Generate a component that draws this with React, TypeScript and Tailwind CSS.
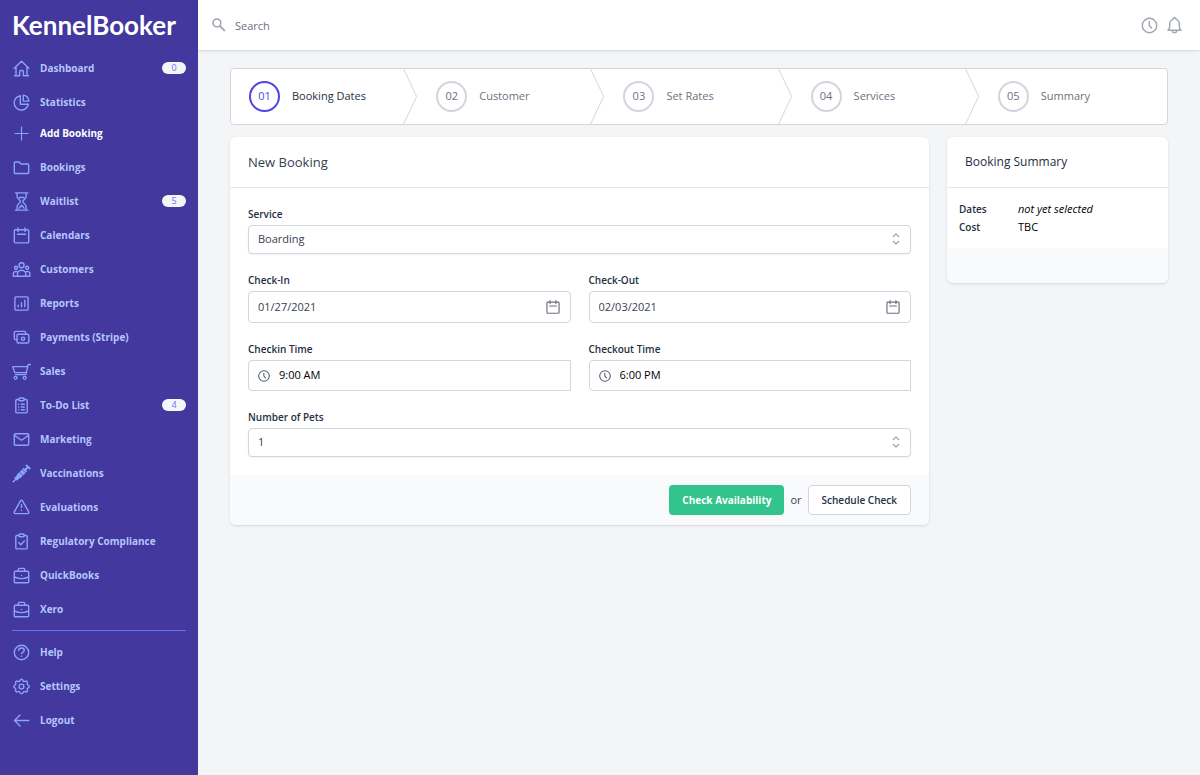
import type { ReactNode } from 'react';
import clsx from 'clsx';

const Icon: React.FC<{ children: ReactNode; className?: string }> = ({
  children,
  className = 'w-[19px] h-[19px]',
}) => (
  <svg
    viewBox="0 0 19 19"
    fill="none"
    stroke="currentColor"
    strokeWidth="1.4"
    strokeLinecap="round"
    strokeLinejoin="round"
    className={clsx('flex-shrink-0', className)}
    aria-hidden="true"
  >
    {children}
  </svg>
);

const calendarPaths = (
  <>
    <rect x="2.3" y="3.7" width="14.4" height="13.2" rx="1" />
    <path d="M6 2v3.4M13 2v3.4M5.5 8.3h8" />
  </>
);

const clockPaths = (
  <>
    <circle cx="9.5" cy="9.5" r="7.2" />
    <path d="M9.3 5.8v3.7l2.2 2.5" />
  </>
);

const briefcasePaths = (
  <>
    <rect x="2.3" y="5.3" width="14.4" height="11.5" rx="1" />
    <path d="M6.3 5.3V3.6a1.2 1.2 0 0 1 1.2-1.2h4a1.2 1.2 0 0 1 1.2 1.2v1.7M2.5 11c4.4 2 9.6 2 14 0" />
    <path d="M9.5 9.5v.1" />
  </>
);

type NavItem = { name: string; icon: ReactNode; count?: number; current?: boolean };

const navigation: NavItem[] = [
  {
    name: 'Dashboard',
    count: 0,
    icon: (
      <path d="M2.2 9.3 9.5 2.2l7.3 7.1M4 8v8.8h3.6v-4a1.3 1.3 0 0 1 1.3-1.3h1.2a1.3 1.3 0 0 1 1.3 1.3v4H15V8M2.5 16.8h5M11.5 16.8h5" />
    ),
  },
  {
    name: 'Statistics',
    icon: (
      <>
        <path d="M8.3 2.7A7.2 7.2 0 1 0 16.4 11.3H8.3z" />
        <path d="M11.3 2.1a6.500 6.500 0 0 1 5.500 6h-5.500z" />
      </>
    ),
  },
  {
    name: 'Add Booking',
    current: true,
    icon: <path strokeWidth="1.2" d="M9.5 3v13M3 9.500h13" />,
  },
  {
    name: 'Bookings',
    icon: (
      <path d="M2.3 5a1 1 0 0 1 1-1h3.800l2 2h6.600a1 1 0 0 1 1 1v7.500a1 1 0 0 1-1 1H3.300a1 1 0 0 1-1-1z" />
    ),
  },
  {
    name: 'Waitlist',
    count: 5,
    icon: (
      <g strokeWidth="1.3">
        <path d="M3.3.8h12.600M3.300 18.200h12.600M5 .8v3.400c0 2.800 3.400 3.600 3.400 5.300S5 12 5 14.800v3.400M14.200.8v3.400c0 2.800-3.400 3.600-3.400 5.300s3.400 2.500 3.400 5.300v3.400" />
        <path d="M7.300 5.500h4.600M7 16.200l2.600-3 2.600 3" />
      </g>
    ),
  },
  { name: 'Calendars', icon: calendarPaths },
  {
    name: 'Customers',
    icon: (
      <>
        <circle cx="9.6" cy="5.2" r="2.5" />
        <circle cx="4" cy="7.8" r="1.5" />
        <circle cx="15.2" cy="7.8" r="1.5" />
        <path d="M5.500 16.200v-2.500a4.100 3.400 0 0 1 8.200 0v2.500zM5.500 16.200H1.300v-2.400c0-1.800 1.400-2.600 3.700-2.200M13.700 16.200h4.200v-2.400c0-1.800-1.400-2.600-3.700-2.200" />
      </>
    ),
  },
  {
    name: 'Reports',
    icon: (
      <>
        <rect x="2.9" y="2.9" width="13.2" height="13.2" rx="1.2" />
        <path d="M6.200 11.300v1.500M9.500 8.700v4.100M12.800 6.200v6.600" />
      </>
    ),
  },
  {
    name: 'Payments (Stripe)',
    icon: (
      <>
        <path d="M5 11.600H3.500a1.200 1.200 0 0 1-1.200-1.200V4.600a1.200 1.200 0 0 1 1.200-1.200h8.800a1.200 1.200 0 0 1 1.200 1.200v1.600" />
        <rect x="5" y="6.300" width="11.8" height="8.7" rx="1.2" />
        <circle cx="11" cy="10.7" r="1.6" />
      </>
    ),
  },
  {
    name: 'Sales',
    icon: (
      <g strokeWidth="1.3">
        <path d="M18.500 2.500h-2.300l-2.400 10.200H3.300M15.400 4.700H.8l2 6h11.500" />
        <circle cx="3.6" cy="15.8" r="1.5" />
        <circle cx="12.7" cy="15.8" r="1.5" />
      </g>
    ),
  },
  {
    name: 'To-Do List',
    count: 4,
    icon: (
      <>
        <path d="M6.800 3.500H5a1.200 1.200 0 0 0-1.200 1.200v11a1.200 1.200 0 0 0 1.200 1.200h9a1.200 1.200 0 0 0 1.200-1.200v-11A1.200 1.200 0 0 0 14 3.500h-1.800" />
        <rect x="6.8" y="2" width="5.4" height="2.8" rx="1.3" />
        <path d="M6.600 8.300h.1M6.600 11h.1M6.600 13.700h.1M9.300 8.300h3M9.300 11h3M9.300 13.700h3" />
      </>
    ),
  },
  {
    name: 'Marketing',
    icon: (
      <>
        <rect x="2.3" y="3.7" width="14.4" height="11.6" rx="1" />
        <path d="m2.500 5.300 5.800 4.200a2 2 0 0 0 2.400 0l5.800-4.200" />
      </>
    ),
  },
  {
    name: 'Vaccinations',
    icon: (
      <g strokeLinecap="butt">
        <path d="M.8 18.200 5 14" strokeWidth="1.5" />
        <path d="m3.600 15.400 3.500-3.500" strokeWidth="4" />
        <path d="m6.300 12.700 7.200-7.200" strokeWidth="5" />
        <path d="m13 6 3.500-3.500M14 .8l4.200 4.200" strokeWidth="1.9" />
        <path d="m7.400 8 3.600 3.600M10.200 5.500l3.400 3.400" stroke="#42389d" strokeWidth=".7" />
      </g>
    ),
  },
  {
    name: 'Evaluations',
    icon: (
      <>
        <path d="M8.500 2.900 2.300 13.800a1.200 1.200 0 0 0 1 1.800h12.400a1.200 1.200 0 0 0 1-1.800L10.500 2.900a1.150 1.150 0 0 0-2 0z" />
        <path d="M9.500 6.800v2.600M9.500 12.300v.1" />
      </>
    ),
  },
  {
    name: 'Regulatory Compliance',
    icon: (
      <>
        <path d="M6.800 3.500H5a1.200 1.200 0 0 0-1.200 1.200v11a1.200 1.200 0 0 0 1.200 1.200h9a1.200 1.200 0 0 0 1.200-1.200v-11A1.200 1.200 0 0 0 14 3.500h-1.800" />
        <rect x="6.8" y="2" width="5.4" height="2.8" rx="1.3" />
        <path d="m6.800 10.800 2 2 3.600-3.800" />
      </>
    ),
  },
  { name: 'QuickBooks', icon: briefcasePaths },
  { name: 'Xero', icon: briefcasePaths },
];

const secondaryNavigation: NavItem[] = [
  {
    name: 'Help',
    icon: (
      <>
        <circle cx="9.5" cy="9.5" r="7.2" />
        <path d="M6.700 7.300a2.800 2.300 0 0 1 5.600 0c0 1.700-2.800 1.800-2.800 3.500M9.500 13.200v.1" />
      </>
    ),
  },
  {
    name: 'Settings',
    icon: (
      <>
        <path d="M8 3.500c.5-1.700 2.500-1.700 3 0a1.500 1.500 0 0 0 2.200.9c1.500-.9 2.900.5 2 2a1.500 1.500 0 0 0 .9 1.700c1.600.5 1.600 2.400 0 2.900a1.500 1.500 0 0 0-.9 1.700c.9 1.500-.5 2.900-2 2a1.500 1.500 0 0 0-2.200.9c-.5 1.700-2.500 1.700-3 0a1.500 1.500 0 0 0-2.200-.9c-1.500.9-2.900-.5-2-2a1.500 1.500 0 0 0-.9-1.700c-1.600-.5-1.600-2.400 0-2.900a1.500 1.500 0 0 0 .9-1.700c-.9-1.500.5-2.900 2-2A1.500 1.500 0 0 0 8 3.500z" />
        <circle cx="9.5" cy="9.5" r="2.4" />
      </>
    ),
  },
  { name: 'Logout', icon: <path d="M16.800 9.500H2.500M8 4 2.500 9.500 8 15" /> },
];

const steps = [
  { id: '01', name: 'Booking Dates', current: true },
  { id: '02', name: 'Customer' },
  { id: '03', name: 'Set Rates' },
  { id: '04', name: 'Services' },
  { id: '05', name: 'Summary' },
];

const NavLink: React.FC<{ item: NavItem }> = ({ item }) => (
  <a
    href="#"
    aria-current={item.current ? 'page' : undefined}
    className={clsx(
      'flex items-center gap-[9px] text-[10px] font-bold',
      item.current ? 'h-7 mb-[3px] text-white' : 'h-[34px] text-[#b4c6fc]'
    )}
  >
    <span className="text-[#8da2fb]">
      <Icon>{item.icon}</Icon>
    </span>
    <span className="flex-1 whitespace-nowrap">{item.name}</span>
    {item.count !== undefined && (
      <span className="w-6 h-3 rounded-full bg-[#f4f5f7] text-[#6875f5] text-[9px] leading-3 font-normal text-center">
        {item.count}
      </span>
    )}
  </a>
);

const Sidebar: React.FC = () => (
  <aside className="w-[198px] flex-shrink-0 bg-[#42389d] px-3">
    <div className="h-[51px] font-['Lato',sans-serif] text-[26px] leading-[50px] font-bold text-white">
      KennelBooker
    </div>
    <nav>
      {navigation.map((item) => (
        <NavLink key={item.name} item={item} />
      ))}
      <hr className="my-1 border-[#6875f5]" />
      {secondaryNavigation.map((item) => (
        <NavLink key={item.name} item={item} />
      ))}
    </nav>
  </aside>
);

const TopBar: React.FC = () => (
  <header className="flex items-center h-[50px] bg-white px-3.5 shadow">
    <label htmlFor="search" className="text-[#9fa6b2]">
      <svg
        viewBox="0 0 14 14"
        className="w-3.5 h-3.5"
        fill="none"
        stroke="currentColor"
        strokeWidth="1.6"
        role="img"
        aria-label="Search"
      >
        <circle cx="4.9" cy="4.9" r="3.9" />
        <path d="m7.800 7.800 5 5" strokeWidth="1.900" />
      </svg>
    </label>
    <input
      id="search"
      type="search"
      placeholder="Search"
      className="flex-1 h-8 ml-[9px] outline-none placeholder:text-[#6b7280]"
    />
    <div className="flex items-center gap-1.5 pr-0.5 text-[#9fa6b2]">
      <button type="button" aria-label="Recent">
        <Icon>{clockPaths}</Icon>
      </button>
      <button type="button" aria-label="Notifications">
        <Icon>
          <path d="M3 14.200h13c-1.300-1-1.700-2-1.700-4V8c0-2.300-1.300-4-3.200-4.600a1.600 1.600 0 0 0-3.200 0C6 4 4.700 5.700 4.700 8v2.200c0 2-.4 3-1.700 4zM7.300 14.400a2.200 2.200 0 0 0 4.400 0" />
        </Icon>
      </button>
    </div>
  </header>
);

const Steps: React.FC = () => (
  <nav aria-label="Progress">
    <ol className="flex h-[57px] bg-white border border-[#d2d6dc] rounded">
      {steps.map((step, idx) => (
        <li key={step.id} className="relative flex-1 flex">
          <a href="#" className="flex items-center gap-3 pl-[18px] text-[11px] font-medium">
            <span
              className={clsx(
                'w-[31px] h-[31px] flex items-center justify-center rounded-full border-2',
                step.current ? 'border-[#5145e5] text-[#5145e5]' : 'border-[#d2d6dc] text-[#6b7280]'
              )}
            >
              {step.id}
            </span>
            <span className={step.current ? 'text-[#252f3f]' : 'text-[#6b7280]'}>{step.name}</span>
          </a>
          {/* Arrow separator */}
          {idx < steps.length - 1 && (
            <svg
              className="absolute top-0 right-0 h-full w-[15px] text-[#d2d6dc]"
              viewBox="0 0 22 80"
              fill="none"
              preserveAspectRatio="none"
              aria-hidden="true"
            >
              <path d="M0 -2L20 40L0 82" vectorEffect="non-scaling-stroke" stroke="currentColor" />
            </svg>
          )}
        </li>
      ))}
    </ol>
  </nav>
);

const Field: React.FC<{ id: string; label: string; wide?: boolean; children: ReactNode }> = ({
  id,
  label,
  wide,
  children,
}) => (
  <div className={wide ? 'col-span-2' : ''}>
    <label htmlFor={id} className="block mb-[3px] text-[10px] leading-4 font-semibold text-[#252f3f]">
      {label}
    </label>
    {children}
  </div>
);

const SelectField: React.FC<{ id: string; label: string; options: string[] }> = ({
  id,
  label,
  options,
}) => (
  <Field id={id} label={label} wide>
    <div className="relative">
      <select
        id={id}
        className="block w-full h-[29px] px-[9px] appearance-none bg-white border border-[#d2d6dc] rounded shadow-xs"
      >
        {options.map((option) => (
          <option key={option}>{option}</option>
        ))}
      </select>
      <svg
        viewBox="0 0 8 12"
        className="absolute right-[11px] top-2 w-2 h-3 text-[#9fa6b2] pointer-events-none"
        fill="none"
        stroke="currentColor"
        strokeWidth="1.2"
        strokeLinecap="round"
        strokeLinejoin="round"
        aria-hidden="true"
      >
        <path d="m1.200 3.700 2.800-2.700 2.800 2.700M1.200 8.300 4 11l2.800-2.700" />
      </svg>
    </div>
  </Field>
);

const DateField: React.FC<{ id: string; label: string; value: string }> = ({ id, label, value }) => (
  <Field id={id} label={label}>
    <div className="flex items-center h-8 px-[9px] bg-white border border-[#d2d6dc] rounded">
      <input id={id} type="text" defaultValue={value} className="flex-1 min-w-0 outline-none" />
      <button type="button" aria-label="Open calendar" className="text-[#6b7280]">
        <Icon className="w-4 h-4">{calendarPaths}</Icon>
      </button>
    </div>
  </Field>
);

const TimeField: React.FC<{ id: string; label: string; value: string }> = ({ id, label, value }) => (
  <Field id={id} label={label}>
    <div className="flex items-center gap-2 h-[31px] px-2 bg-white border border-[#d2d6dc] rounded-l">
      <span className="text-[#4b5563]">
        <Icon className="w-3.5 h-3.5">{clockPaths}</Icon>
      </span>
      <input id={id} type="text" defaultValue={value} className="flex-1 min-w-0 outline-none text-black" />
    </div>
  </Field>
);

const BookingForm: React.FC = () => (
  <form className="col-span-3 bg-white rounded-md shadow overflow-hidden">
    <h2 className="px-[18px] border-b border-[#e5e7eb] text-[13px] leading-[50px] text-[#374151]">
      New Booking
    </h2>
    <div className="grid grid-cols-2 gap-[18px] p-[18px]">
      <SelectField id="service" label="Service" options={['Boarding', 'Daycare', 'Grooming']} />
      <DateField id="check-in" label="Check-In" value="01/27/2021" />
      <DateField id="check-out" label="Check-Out" value="02/03/2021" />
      <TimeField id="checkin-time" label="Checkin Time" value="9:00 AM" />
      <TimeField id="checkout-time" label="Checkout Time" value="6:00 PM" />
      <SelectField id="pets" label="Number of Pets" options={['1', '2', '3', '4']} />
    </div>
    <div className="flex items-center justify-end px-[18px] py-2.5 bg-[#f9fafb]">
      <button
        type="button"
        className="h-[30px] px-[13px] rounded bg-[#31c48d] text-white text-[10px] font-bold"
      >
        Check Availability
      </button>
      <span className="mx-1.5">or</span>
      <button
        type="button"
        className="h-[30px] px-[13px] rounded border border-[#d2d6dc] bg-white text-[#252f3f] text-[10px] font-semibold"
      >
        Schedule Check
      </button>
    </div>
  </form>
);

const BookingSummary: React.FC = () => (
  <section className="self-start bg-white rounded-md shadow overflow-hidden">
    <h3 className="px-[18px] border-b border-[#e5e7eb] text-[12px] leading-[50px] text-[#252f3f]">
      Booking Summary
    </h3>
    <dl className="grid grid-cols-[59px_1fr] p-3 leading-[18px]">
      <dt className="text-[10px] font-semibold text-[#252f3f]">Dates</dt>
      <dd className="italic text-black">not yet selected</dd>
      <dt className="text-[10px] font-semibold text-[#252f3f]">Cost</dt>
      <dd className="text-black">TBC</dd>
    </dl>
    <div className="h-[35px] bg-[#f9fafb]" />
  </section>
);

export default function App() {
  return (
    <div className="flex min-h-screen bg-[#f4f5f7] font-['Open_Sans','Noto_Sans',sans-serif] text-[11px] text-[#374151]">
      <Sidebar />
      <div className="flex-1 min-w-0">
        <TopBar />
        <main className="px-8 pt-[18px]">
          <Steps />
          <div className="grid grid-cols-4 gap-[18px] mt-3">
            <BookingForm />
            <BookingSummary />
          </div>
        </main>
      </div>
    </div>
  );
}
